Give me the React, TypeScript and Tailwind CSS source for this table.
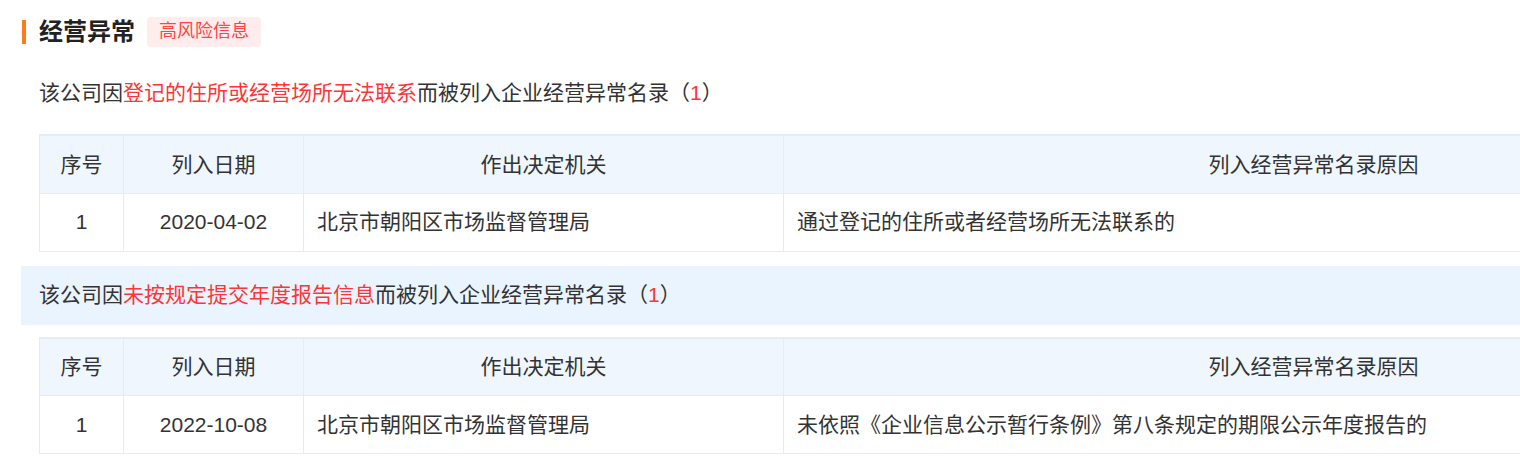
import React from "react";

type Record = {
  no: number;
  date: string;
  org: string;
  reason: string;
};

type Section = {
  cause: string;
  count: number;
  highlight: boolean;
  rows: Record[];
};

const sections: Section[] = [
  {
    cause: "登记的住所或经营场所无法联系",
    count: 1,
    highlight: false,
    rows: [
      {
        no: 1,
        date: "2020-04-02",
        org: "北京市朝阳区市场监督管理局",
        reason: "通过登记的住所或者经营场所无法联系的",
      },
    ],
  },
  {
    cause: "未按规定提交年度报告信息",
    count: 1,
    highlight: true,
    rows: [
      {
        no: 1,
        date: "2022-10-08",
        org: "北京市朝阳区市场监督管理局",
        reason: "未依照《企业信息公示暂行条例》第八条规定的期限公示年度报告的",
      },
    ],
  },
];

function RecordTable({ rows }: { rows: Record[] }) {
  return (
    <table className="ml-[18px] w-[1804px] table-fixed border-collapse border-t-2 border-[#e4ecf6] text-[21px] text-[#333]">
      <colgroup>
        <col className="w-[84px]" />
        <col className="w-[180px]" />
        <col className="w-[480px]" />
        <col className="w-[1060px]" />
      </colgroup>
      <thead>
        <tr className="h-[58px] bg-[#eff6fd]">
          <th className="border border-[#e4ecf6] font-normal">序号</th>
          <th className="border border-[#e4ecf6] font-normal">列入日期</th>
          <th className="border border-[#e4ecf6] font-normal">作出决定机关</th>
          <th className="border border-[#e4ecf6] font-normal">列入经营异常名录原因</th>
        </tr>
      </thead>
      <tbody>
        {rows.map((r) => (
          <tr key={r.no} className="h-[58px] bg-white">
            <td className="border border-[#e4ecf6] text-center">{r.no}</td>
            <td className="border border-[#e4ecf6] text-center">{r.date}</td>
            <td className="border border-[#e4ecf6] px-[13px]">{r.org}</td>
            <td className="border border-[#e4ecf6] px-[13px]">{r.reason}</td>
          </tr>
        ))}
      </tbody>
    </table>
  );
}

export default function App() {
  return (
    <div
      className="w-screen h-[457px] overflow-hidden bg-white"
      style={{ fontFamily: '"Liberation Sans", "Noto Sans CJK SC", sans-serif' }}
    >
      <div className="w-[1860px] pl-[21px]">
        {/* title */}
        <div className="flex h-[63px] items-center">
          <div className="ml-[1px] h-[24px] w-[4px] bg-[#fd7b1c]" />
          <h2 className="ml-[13px] text-[24px] font-bold leading-none text-[#222]">经营异常</h2>
          <span className="ml-[12px] flex h-[30px] items-center rounded-[4px] bg-[#ffeded] px-[12px] text-[18px] text-[#ff4444]">
            高风险信息
          </span>
        </div>

        {sections.map((s, i) => (
          <div key={i} className={i > 0 ? "mt-[14px]" : ""}>
            <div
              className={
                "flex h-[59px] items-center pl-[18px] text-[21px] text-[#333] " +
                (s.highlight ? "bg-[#eaf4fe]" : "bg-white")
              }
            >
              该公司因<span className="text-[#ff3535]">{s.cause}</span>而被列入企业经营异常名录（
              <span className="text-[#ff3535]">{s.count}</span>）
            </div>
            <div className="mt-[12px]">
              <RecordTable rows={s.rows} />
            </div>
          </div>
        ))}
      </div>
    </div>
  );
}
